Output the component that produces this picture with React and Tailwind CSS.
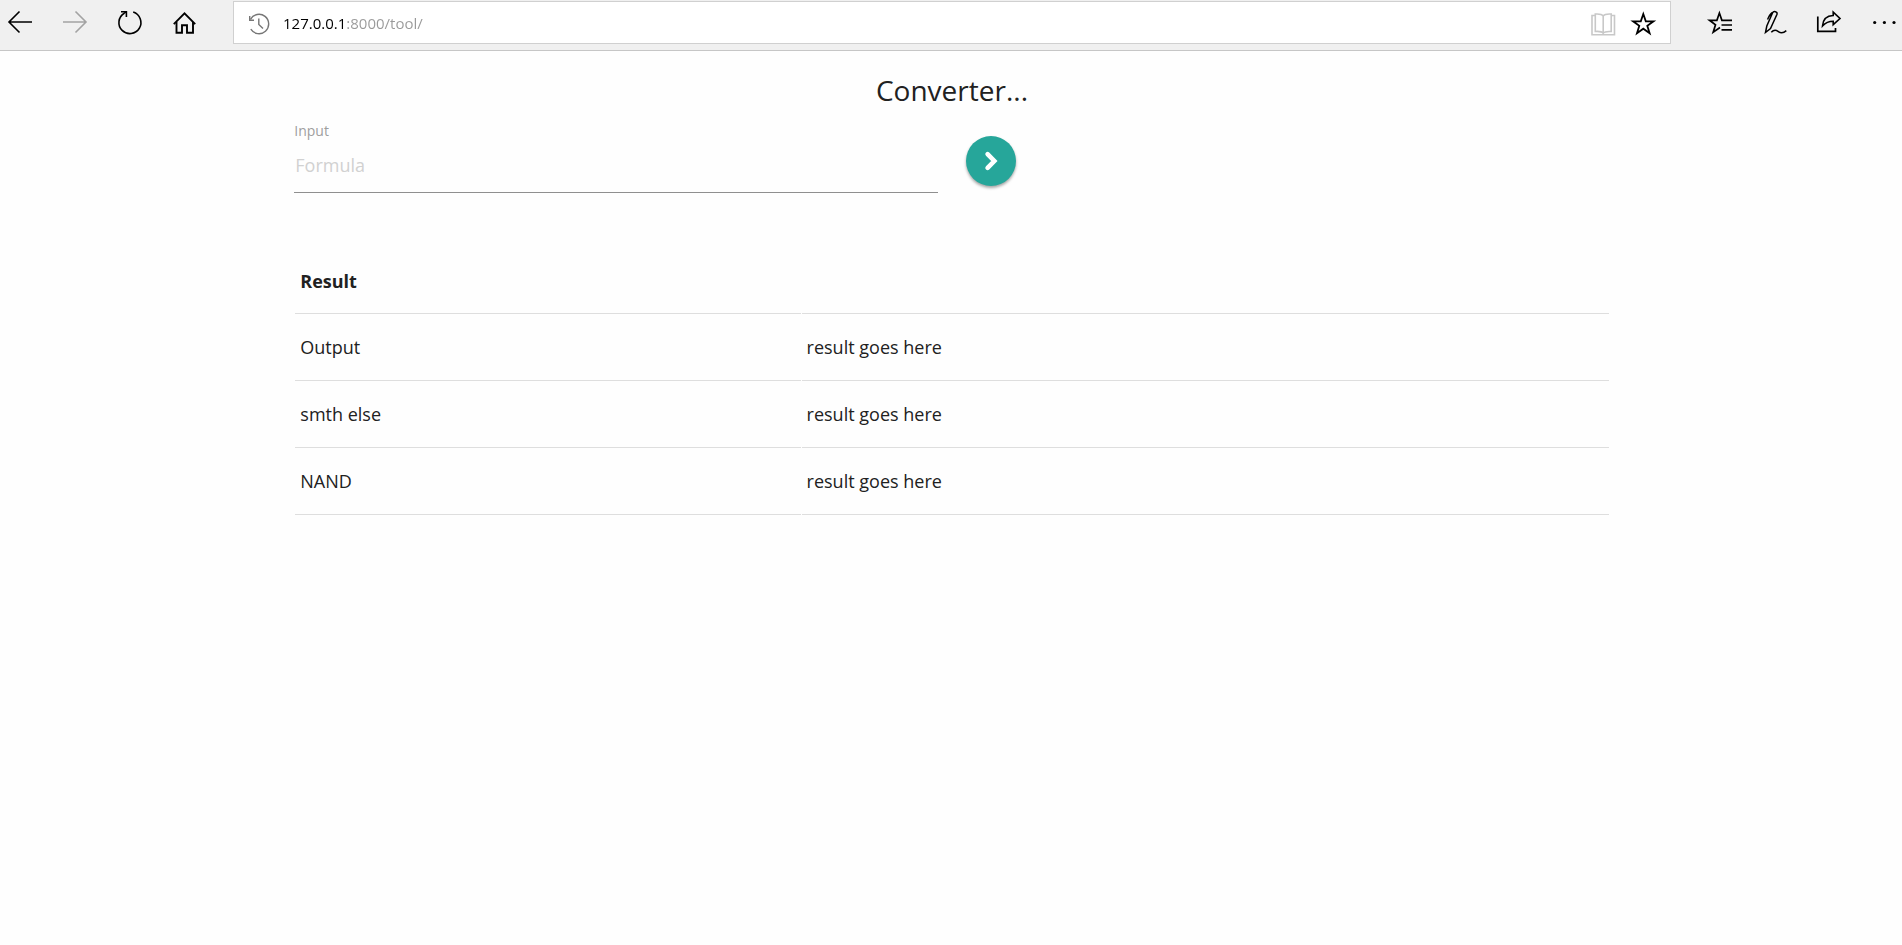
import React from "react";

function ToolIcon({ width = 40, children, className = "text-black" }) {
  return (
    <svg
      width={width}
      height="40"
      viewBox={`0 2 ${width} 40`}
      fill="none"
      stroke="currentColor"
      strokeWidth="1.6"
      className={`block shrink-0 ${className}`}
      aria-hidden="true"
    >
      {children}
    </svg>
  );
}

function BrowserBar() {
  return (
    <header className="flex h-[51px] items-start border-b border-[#c6c6c6] bg-[#f0f0f0] pt-px">
      <nav className="flex h-[42px] shrink-0 items-center gap-[15px]" aria-label="Navigation">
        <button type="button" aria-label="Back">
          <ToolIcon>
            <path d="M32 22H9M19.5 11.5L9 22l10.500 10.500" />
          </ToolIcon>
        </button>
        <button type="button" aria-label="Forward">
          <ToolIcon className="text-[#a3a3a3]">
            <path d="M8 22H31M20.500 11.500L31 22 20.500 32.500" />
          </ToolIcon>
        </button>
        <button type="button" aria-label="Refresh">
          <ToolIcon>
            <path d="M23.200 12.100A11 11 0 1 1 14.200 13.200L16.200 11.800" />
            <path d="M11 11.800H16.400V17" />
          </ToolIcon>
        </button>
        <button type="button" aria-label="Home">
          <ToolIcon>
            <path d="M8.800 24.200L19.500 13.400 30.200 24.200" strokeWidth="1.900" />
            <path d="M11.500 22V32.800H17V25.200H22V32.800H28V22" strokeWidth="1.900" />
          </ToolIcon>
        </button>
      </nav>

      <div className="ml-7 mr-[29px] flex h-[43px] min-w-0 flex-1 items-center border border-[#d0d0d0] bg-white pl-[5px] pr-[7px]">
        <ToolIcon className="text-[#767676]">
          <path d="M11.500 18.300A9.700 9.700 0 1 1 11.800 28.200" strokeWidth="1.400" />
          <path d="M10.700 15V19.300H15" strokeWidth="1.400" />
          <path d="M19.800 17.500V23.500L24 27.500" strokeWidth="1.400" />
        </ToolIcon>
        <input
          aria-label="Address"
          defaultValue="127.0.0.1:8000/tool/"
          className="ml-1 min-w-0 flex-1 bg-[linear-gradient(90deg,#000_62px,#999_62px)] bg-clip-text text-[15px] leading-6 text-transparent outline-none"
        />
        <button type="button" aria-label="Reading view">
          <ToolIcon className="text-[#c8c8c8]">
            <path d="M12 14.500H9V33.800H31.500V14.500H28.500" strokeWidth="1.600" />
            <path
              d="M20.200 15C19 13.300 15 12.800 12.300 13V30.500C15 30.300 19 30.600 20.200 32.300C21.400 30.600 25.400 30.300 28.200 30.500V13C25.400 12.800 21.400 13.300 20.200 15ZV32.300"
              strokeWidth="1.600"
            />
          </ToolIcon>
        </button>
        <button type="button" aria-label="Add to favorites">
          <ToolIcon>
            <path
              d="M20.300 13L22.800 20.300H30.500L24.300 24.800 26.600 32.200 20.300 27.700 14 32.200 16.300 24.800 10.100 20.300H17.800Z"
              strokeWidth="1.800"
            />
          </ToolIcon>
        </button>
      </div>

      <div className="flex h-[42px] shrink-0 items-center gap-[15px]">
        <button type="button" aria-label="Favorites hub">
          <ToolIcon>
            <path
              d="M32 20.300H21.900L19.400 13 16.900 20.300H9.500L15.500 24.800 13.200 32.200 20 27.500M21.500 25H32M21.500 29.800H32"
              strokeWidth="1.700"
            />
          </ToolIcon>
        </button>
        <button type="button" aria-label="Add notes">
          <ToolIcon>
            <path
              d="M10.500 32.500L11.800 26 17.500 13C18.500 10.600 22.800 11.400 22 14.200L15.500 28.500ZM17.800 12.500C15 13.200 14.300 16 12.500 19.500"
              strokeWidth="1.500"
            />
            <path d="M16.300 32.300C18.500 29.800 21 29.800 23 31.300S28 33.500 31.300 30.600" strokeWidth="1.500" />
          </ToolIcon>
        </button>
        <button type="button" aria-label="Share">
          <ToolIcon>
            <path d="M7.800 16.500V31.400H25.500V28" strokeWidth="1.700" />
            <path
              d="M12.500 26C13 19.500 16.500 15.700 23.200 15.500V12.200L30 18.500 23.200 24.700V21.300C18.500 21.300 15.500 22.800 12.500 26Z"
              strokeWidth="1.600"
            />
          </ToolIcon>
        </button>
        <button type="button" aria-label="More">
          <ToolIcon width={37}>
            <g fill="currentColor" stroke="none">
              <circle cx="9.700" cy="22.500" r="1.600" />
              <circle cx="19.400" cy="22.500" r="1.600" />
              <circle cx="29" cy="22.500" r="1.600" />
            </g>
          </ToolIcon>
        </button>
      </div>
    </header>
  );
}

const rows = [
  ["Output", "result goes here"],
  ["smth else", "result goes here"],
  ["NAND", "result goes here"],
];

export default function App() {
  return (
    <div className="min-h-screen bg-[#fefefe] font-['Open_Sans','Noto_Sans',sans-serif] text-[#212121]">
      <BrowserBar />
      <main className="mx-auto w-[70%] pl-[9px] pr-[7px] pt-[19px]">
        <h1 className="text-center text-[28px] leading-10">Converter...</h1>

        <form className="mt-2 grid grid-cols-2 gap-7" onSubmit={(e) => e.preventDefault()}>
          <div className="flex flex-col">
            <label htmlFor="formula" className="text-sm leading-[26px] text-[#9e9e9e]">
              Input
            </label>
            <input
              id="formula"
              type="text"
              placeholder="Formula"
              className="h-[49px] border-b border-[#8f8f8f] bg-transparent px-px pb-[7px] text-lg outline-none placeholder:text-[#d1d1d1]"
            />
          </div>
          <button
            type="submit"
            aria-label="Convert"
            className="mt-[18px] flex size-[50px] items-center justify-center rounded-full bg-[#26a69a] text-white shadow-[0_2px_3px_rgba(0,0,0,0.35)]"
          >
            <svg width="16" height="22" viewBox="0 0 16 22" fill="none" aria-hidden="true">
              <path d="M4.600 4.200L11.300 11 4.600 17.800" stroke="currentColor" strokeWidth="4.600" strokeLinecap="round" strokeLinejoin="miter" />
            </svg>
          </button>
        </form>

        <table className="mt-[54px] w-full table-fixed border-separate border-spacing-x-px border-spacing-y-0 text-left text-lg">
          <thead>
            <tr>
              <th className="h-[67px] w-[38.5%] border-b border-[#dedede] px-[5px] pt-px font-bold">Result</th>
              <th className="border-b border-[#dedede]" aria-label="Value" />
            </tr>
          </thead>
          <tbody>
            {rows.map(([name, value]) => (
              <tr key={name}>
                <td className="h-[67px] border-b border-[#dedede] px-[5px]">{name}</td>
                <td className="h-[67px] border-b border-[#dedede] px-[5px]">{value}</td>
              </tr>
            ))}
          </tbody>
        </table>
      </main>
    </div>
  );
}
